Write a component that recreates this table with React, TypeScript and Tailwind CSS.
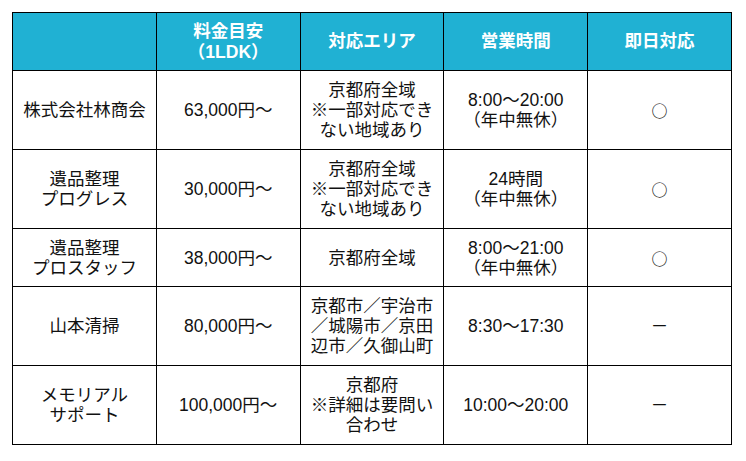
const HEAD = ["", "料金目安\n（1LDK）", "対応エリア", "営業時間", "即日対応"];

type Row = { cells: string[]; h: string };

const ROWS: Row[] = [
  {
    h: "h-[79px]",
    cells: ["株式会社林商会", "63,000円～", "京都府全域\n※一部対応でき\nない地域あり", "8:00～20:00\n（年中無休）", "○"],
  },
  {
    h: "h-[79px]",
    cells: ["遺品整理\nプログレス", "30,000円～", "京都府全域\n※一部対応でき\nない地域あり", "24時間\n（年中無休）", "○"],
  },
  {
    h: "h-[58px]",
    cells: ["遺品整理\nプロスタッフ", "38,000円～", "京都府全域", "8:00～21:00\n（年中無休）", "○"],
  },
  {
    h: "h-[79px]",
    cells: ["山本清掃", "80,000円～", "京都市／宇治市\n／城陽市／京田\n辺市／久御山町", "8:30～17:30", "－"],
  },
  {
    h: "h-[79px]",
    cells: ["メモリアル\nサポート", "100,000円～", "京都府\n※詳細は要問い\n合わせ", "10:00～20:00", "－"],
  },
];

function Lines({ text }: { text: string }) {
  // the circle mark reads too small in Liberation Sans, so use the CJK face for it
  if (text === "○") {
    return <span className="block font-['Noto_Sans_CJK_JP',sans-serif] text-[16px] font-medium">{text}</span>;
  }
  return (
    <>
      {text.split("\n").map((line, i) => (
        <span key={i} className="block">
          {line}
        </span>
      ))}
    </>
  );
}

export default function App() {
  return (
    <div
      className="w-[746px] h-[461px] bg-white pl-[12px] pt-[12px]"
      style={{ fontFamily: '"Liberation Sans", Arial, "Noto Sans CJK JP", sans-serif' }}
    >
      <table className="w-[720px] table-fixed border-collapse text-[17.5px] leading-[20px] text-[#111]">
        <thead>
          <tr className="h-[58px] bg-[#20b1d3]">
            {HEAD.map((h, i) => (
              <th key={i} className="border border-black px-1 text-center align-middle font-bold text-white leading-[21px]">
                <Lines text={h} />
              </th>
            ))}
          </tr>
        </thead>
        <tbody>
          {ROWS.map((row, r) => (
            <tr key={r} className={row.h}>
              {row.cells.map((c, i) => (
                <td key={i} className="border border-black px-1 text-center align-middle">
                  <Lines text={c} />
                </td>
              ))}
            </tr>
          ))}
        </tbody>
      </table>
    </div>
  );
}
